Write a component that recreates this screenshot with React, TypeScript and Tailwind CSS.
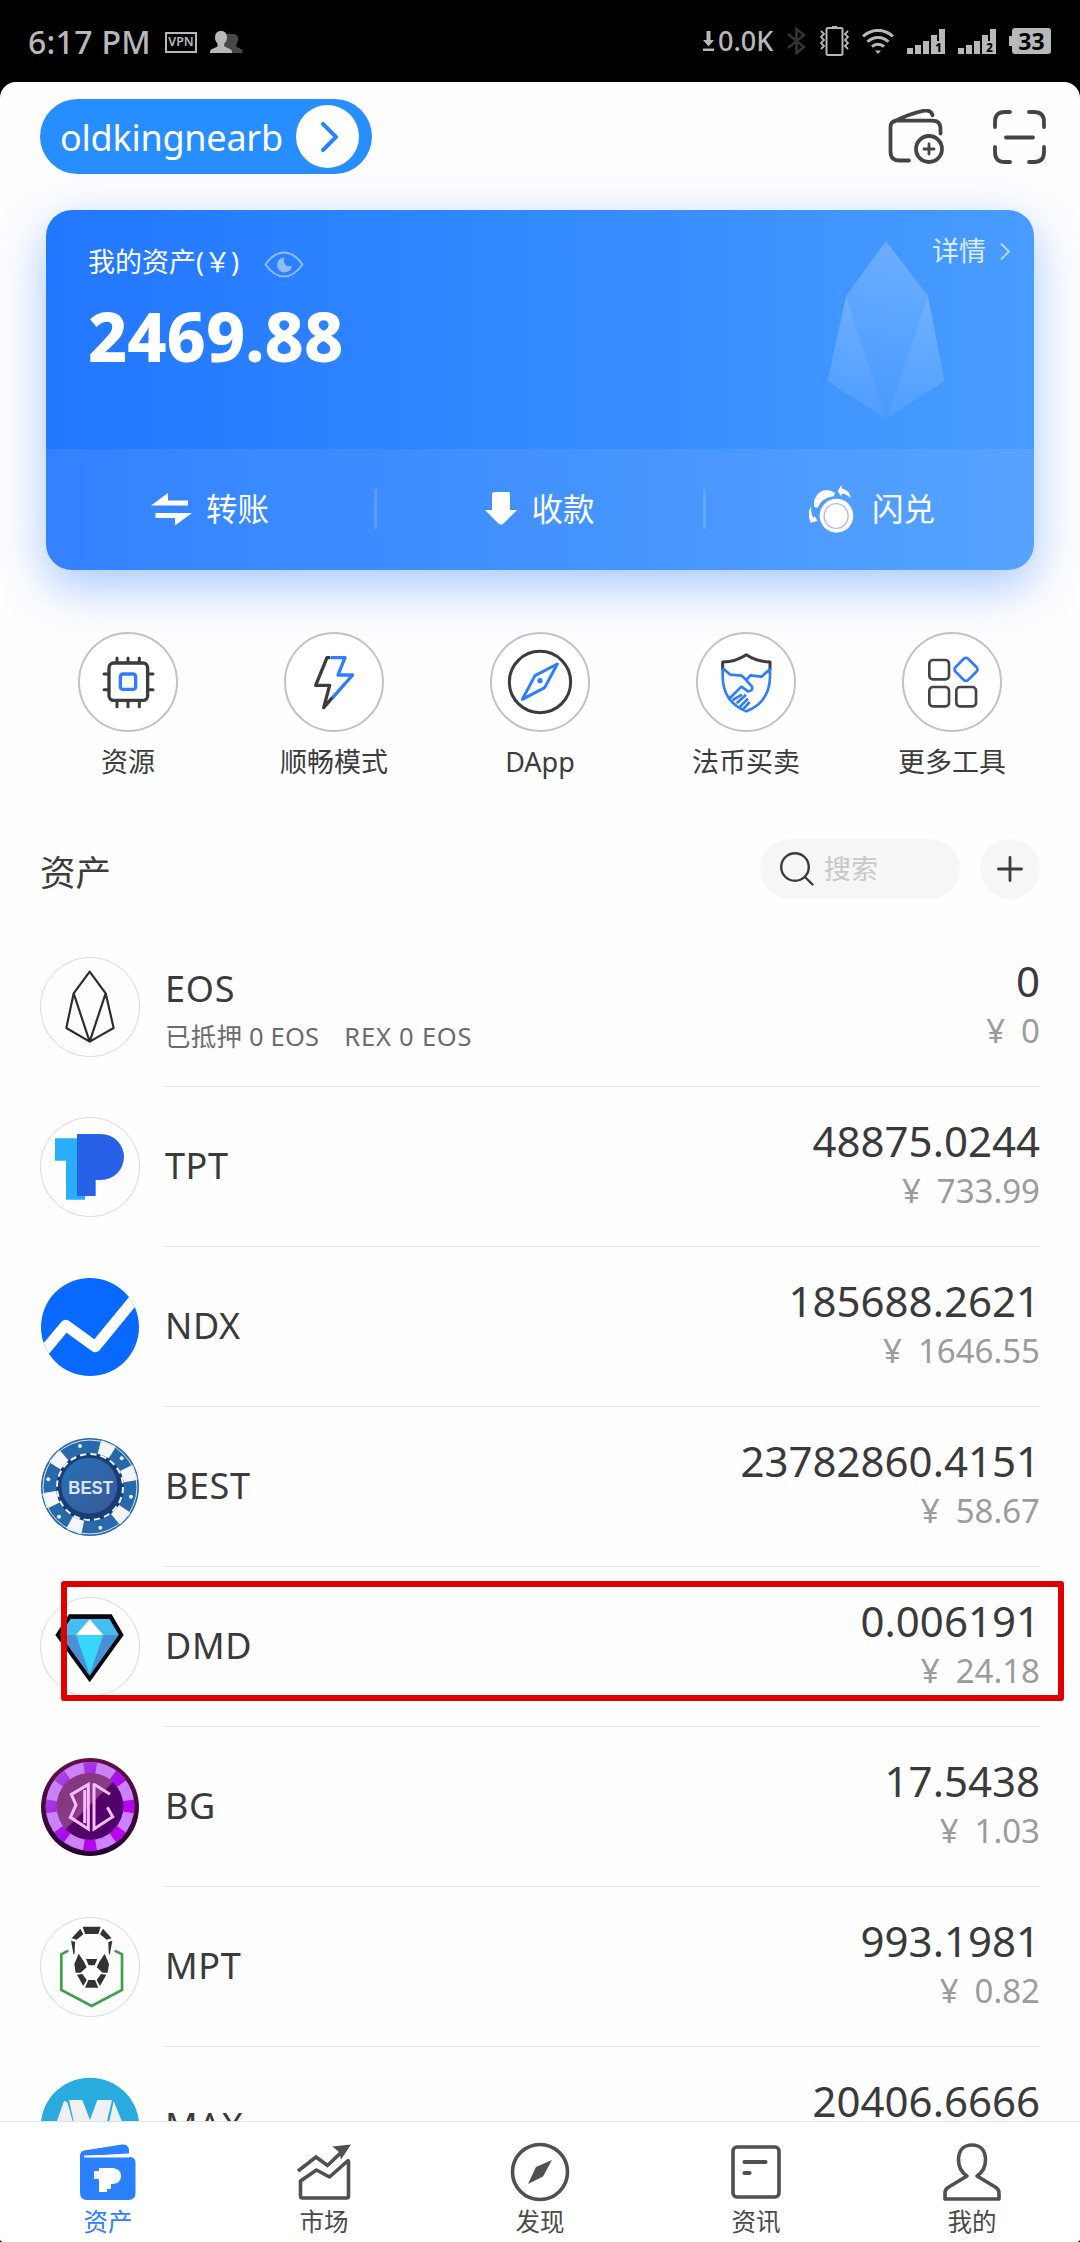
import type { ReactNode } from "react";

const INK = "#3c3c3c";

function mirror(points: string, axis: number) {
  return points
    .split(" ")
    .map((p) => {
      const [x, y] = p.split(",").map(Number);
      return `${axis * 2 - x},${y}`;
    })
    .join(" ");
}

function StatusBar() {
  return (
    <div className="flex h-[82px] shrink-0 items-center justify-between bg-black pr-[29px] pl-7 text-[#b8b8b8]">
      <div className="flex items-center pt-0.5">
        <span className="w-[137px] text-[32px] leading-10 font-medium tracking-[0.3px] whitespace-nowrap">6:17 PM</span>
        <span className="flex h-[21px] w-8 items-center justify-center border-2 border-[#b8b8b8] text-[12.5px] leading-none font-semibold">
          VPN
        </span>
        <svg className="ml-[13px] h-[22px] w-[33px]" viewBox="0 0 33 22">
          <path
            fill="#484848"
            d="M23.500 3c3.200 0 4.700 2.100 4.700 5 0 2.200-.8 4-1.900 5.200v2.300l6.200 3.400V22H15V3z"
          />
          <path
            fill="#b8b8b8"
            d="M11 0c4 0 6 2.600 6 6.200 0 2.600-.9 4.900-2.500 6.200v3l6.300 3c1 .5 1.200 1.500 1.200 3.600H0c0-2 .2-3.100 1.200-3.600l6.300-3v-3C5.900 11.100 5 8.800 5 6.200 5 2.600 7 0 11 0z"
          />
        </svg>
      </div>
      <div className="flex items-center">
        <svg className="h-5 w-[11px]" viewBox="0 0 11 20" fill="#b8b8b8">
          <path d="M3.500 0h4v9H11l-5.500 6.500L0 9h3.500zM0 17.500h11V20H0z" />
        </svg>
        <span className="ml-1 w-[69px] text-[27px] leading-10 font-medium whitespace-nowrap">0.0K</span>
        <svg className="h-7 w-[19px]" viewBox="0 0 19 28" fill="none" stroke="#333" strokeWidth="2.600">
          <path d="M1 7l16 13-7.500 6V2L17 8 1 21" />
        </svg>
        <svg className="ml-[14px] h-[30px] w-[29px]" viewBox="0 0 29 30" fill="none" stroke="#b8b8b8" strokeWidth="2">
          <rect x="6.500" y="2" width="16" height="27" rx="1.500" />
          <path d="M12 1.500h5" strokeWidth="3" />
          <path d="M1 5l3 3-3 3 3 3-3 3 3 3-3 3M28 5l-3 3 3 3-3 3 3 3-3 3 3 3" strokeWidth="1.800" />
        </svg>
        <svg className="ml-[13px] h-[25px] w-8" viewBox="0 0 32 25" fill="none" stroke="#b8b8b8" strokeWidth="3">
          <path d="M1 7.500a21.500 21.500 0 0 1 30 0M5.500 12.700a15 15 0 0 1 21 0M10 17.700a8.700 8.700 0 0 1 12 0" />
          <path d="M13 21.500h6L16 25z" fill="#b8b8b8" stroke="none" />
        </svg>
        {["1", "2"].map((n, i) => (
          <svg
            key={n}
            className={i ? "ml-[13px] h-[25px] w-[38px] overflow-visible" : "ml-[13px] h-[25px] w-[38px] overflow-visible"}
            viewBox="0 0 38 25"
          >
            <path fill="#b8b8b8" d="M0 19h6v6H0zM8 16h6v9H8zM16 12h6v13h-6zM24 6h6v6h2V0h6v25H24z" />
            <text x="31.500" y="23" fontSize="11.500" fontWeight="800" textAnchor="middle" fill="#000">
              {n}
            </text>
          </svg>
        ))}
        <div className="ml-[13px] flex h-[26px] items-center">
          <div className="h-[10px] w-[3px] bg-[#b8b8b8]" />
          <div className="flex h-[26px] w-[39px] items-center justify-center rounded-[3px] bg-[#b8b8b8] text-[23px] leading-none font-bold text-black">
            33
          </div>
        </div>
      </div>
    </div>
  );
}

function Header() {
  return (
    <div className="flex h-[75px] shrink-0 items-center justify-between pr-[34px] pl-10">
      <div className="flex h-[75px] w-[332px] items-center rounded-full bg-[#268eff] pl-5 text-white">
        <span className="w-[236px] pt-0.5 text-[36px] leading-[50px] tracking-[-0.25px] whitespace-nowrap">oldkingnearb</span>
        <span className="flex h-[63px] w-[63px] items-center justify-center rounded-full bg-white">
          <svg className="ml-1 h-[30px] w-[18px]" viewBox="0 0 18 30" fill="none" stroke="#2a84f5" strokeWidth="4" strokeLinecap="round" strokeLinejoin="round">
            <path d="M2 2l13 13L2 28" />
          </svg>
        </span>
      </div>
      <div className="flex items-center gap-[49px]">
        <svg className="h-14 w-14" viewBox="888 109 56 56" fill="none" stroke="#444" strokeWidth="3.800" strokeLinecap="round" strokeLinejoin="round">
          <path d="M909 160.500h-9.500q-9 0-9-9V127q0-5 5-6.300h37q8 0 8 8v4.800M894 121.500q16-8 30-10.800 7-1 8.500 4.500" />
          <circle cx="929" cy="149" r="13" />
          <path d="M929 144v10M924 149h10" strokeWidth="2.800" />
        </svg>
        <svg className="h-[54px] w-[53px]" viewBox="0 0 53 54" fill="none" stroke="#444" strokeWidth="3.800" strokeLinecap="round">
          <path d="M2 17v-5Q2 2 12 2h5M36 2h5q10 0 10 10v5M51 37v5q0 10-10 10h-5M17 52h-5Q2 52 2 42v-5M13 27.500h27" />
        </svg>
      </div>
    </div>
  );
}

function CardAction({ icon, label, gap }: { icon: ReactNode; label: string; gap: string }) {
  return (
    <div className={`flex items-center justify-center ${gap}`}>
      {icon}
      <span className="text-[31.500px] leading-10">{label}</span>
    </div>
  );
}

function BalanceCard() {
  return (
    <div className="mx-[46px] mt-9 flex h-[360px] shrink-0 flex-col overflow-hidden rounded-[26px] bg-linear-to-r from-[#2277ff] via-[#3389ff] to-[#489cff] text-white shadow-[0_16px_50px_rgba(41,121,255,0.42)]">
      <div className="relative flex h-[239px] shrink-0 justify-between pl-[42px]">
        <div className="pt-[34px]">
          <div className="flex items-center">
            <span className="text-[27px] leading-9 whitespace-nowrap">我的资产(￥)</span>
            <svg className="mt-1 ml-[25px] h-[27px] w-10" viewBox="0 0 40 27" fill="none" stroke="#8fbcff" strokeWidth="2">
              <path d="M1.500 13.500Q10 1.500 20 1.500t18.500 12Q30 25.500 20 25.500T1.500 13.500z" />
              <path d="M20 6a7.500 7.500 0 1 0 7.500 8.500q-5 1-7-1.800T20 6z" fill="#8fbcff" stroke="none" transform="translate(.5 .5)" />
            </svg>
          </div>
          <div className="mt-[13px] text-[68px] leading-[86px] font-extrabold">2469.88</div>
        </div>
        <svg className="absolute top-[31px] left-[781px] h-[179px] w-[118px]" viewBox="827 241 118 179">
          <defs>
            <linearGradient id="face" x1="0" y1="0" x2="0" y2="1">
              <stop offset="0" stopColor="#fff" stopOpacity=".22" />
              <stop offset="1" stopColor="#fff" stopOpacity=".03" />
            </linearGradient>
            <linearGradient id="side" x1="0" y1="0" x2="0" y2="1">
              <stop offset="0" stopColor="#fff" stopOpacity=".24" />
              <stop offset="1" stopColor="#fff" stopOpacity=".07" />
            </linearGradient>
          </defs>
          <path fill="url(#face)" d="M886 241l42 55-42 123-40-123z" />
          <path fill="url(#side)" d="M846 296l40 123-58.500-38zM928 296l-42 123 58.500-38z" />
        </svg>
        <div className="mt-[23px] flex h-9 items-center pr-6 text-white/80">
          <span className="text-[27px] leading-9">详情</span>
          <svg className="ml-3.5 h-[17px] w-[10px]" viewBox="0 0 10 17" fill="none" stroke="#bcdcff" strokeWidth="1.800">
            <path d="M1 .5l8 8-8 8" />
          </svg>
        </div>
      </div>
      <div className="grid flex-1 grid-cols-[328px_332px_328px] items-center bg-white/8 pb-0.5">
        <CardAction
          label="转账"
          gap="gap-[14px]"
          icon={
            <svg className="h-8 w-[41px]" viewBox="0 0 41 32" fill="#fff">
              <path d="M0 12.500L17 0v7.500h20v5zM41 20L24 32.500V25H4.500v-5z" />
            </svg>
          }
        />
        <div className="flex h-10 items-center justify-center border-x-[3px] border-white/15">
          <CardAction
            label="收款"
            gap="gap-[14px]"
            icon={
              <svg className="h-[33px] w-8" viewBox="0 0 32 33" fill="#fff">
                <path d="M9 0h14q2 0 2 2v16h7L19 31q-3 3-6 0L0 18h7V2q0-2 2-2z" />
              </svg>
            }
          />
        </div>
        <div className="pl-1">
          <CardAction
            label="闪兑"
            gap="gap-[18px]"
            icon={
              <svg className="h-12 w-[45px]" viewBox="785 884 131 144" fill="#fff" preserveAspectRatio="none">
                <path d="M800 950q-5-22 13-42 22-18 48 0l-4 10q-35 5-47 34z" />
                <path d="M868 902l12-18v10q24 6 26 30-10-14-26-14v9zM792 948q-16 24-2 46l-2 4 22-6-8-14-4 4q-10-16-6-34z" />
                <ellipse cx="865" cy="976" rx="49" ry="51" />
                <ellipse cx="864" cy="977" rx="35" ry="37" fill="none" stroke="#b9b3f5" strokeWidth="4" />
              </svg>
            }
          />
        </div>
      </div>
    </div>
  );
}

const BLUE = "#2e7dff";

const tools: { label: string; icon: ReactNode }[] = [
  {
    label: "资源",
    icon: (
      <svg className="h-full w-full" viewBox="114 66 300 300" fill="none" stroke={INK} strokeWidth="9" strokeLinecap="round">
        <path d="M231 144v12M264 144v12M298 144v12M231 275v15M264 275v15M298 275v15M192 192h12M192 239h12M327 192h12M327 239h12" />
        <rect x="207" y="159" width="116" height="112" rx="14" strokeWidth="10" />
        <rect x="241" y="192" width="46" height="46" rx="8" stroke={BLUE} strokeWidth="10" />
      </svg>
    ),
  },
  {
    label: "顺畅模式",
    icon: (
      <svg className="h-full w-full" viewBox="732 66 300 300" fill="none" strokeWidth="10" strokeLinejoin="round" strokeLinecap="round">
        <path d="M875 143h40l-21 52h44l-60 68" stroke={BLUE} />
        <path d="M870 143h-9l-34 83h42l-18 67 26-30" stroke={INK} strokeLinecap="butt" />
      </svg>
    ),
  },
  {
    label: "DApp",
    icon: (
      <svg className="h-full w-full" viewBox="1350 66 300 300" fill="none" strokeWidth="9" strokeLinejoin="round">
        <circle cx="1500" cy="216" r="92" stroke={INK} />
        <path d="M1552 162l-67 35-38 71 67-35z" stroke={BLUE} />
        <circle cx="1500" cy="212" r="8" fill={BLUE} />
      </svg>
    ),
  },
  {
    label: "法币买卖",
    icon: (
      <svg className="h-full w-full" viewBox="408 66 300 300" fill="none" strokeWidth="9" strokeLinejoin="round">
        <path d="M488 180v-24q40-1 71-22 32 21 71 22v24" stroke={INK} />
        <path
          d="M488 178v24q2 75 71 102 69-27 71-102v-24l-26 22-33-4-12 14-14-13-34-3-23-20M558 210l18 20q4 12-12 14l-20-14-34 34M518 270l28-16M530 280l28-26M540 290l24-24M549 298l20-22"
          stroke={BLUE}
          strokeWidth="8"
        />
      </svg>
    ),
  },
  {
    label: "更多工具",
    icon: (
      <svg className="h-full w-full" viewBox="1026 66 300 300" fill="none" stroke="#444" strokeWidth="8">
        <rect x="1108" y="150" width="59" height="58" rx="11" />
        <rect x="1108" y="231" width="59" height="58" rx="11" />
        <rect x="1189" y="231" width="59" height="58" rx="11" />
        <rect x="1191" y="151" width="54" height="54" rx="9" stroke={BLUE} transform="rotate(45 1218 178)" />
      </svg>
    ),
  },
];

function Tools() {
  return (
    <div className="mt-[62px] grid shrink-0 grid-cols-5 px-[25px]">
      {tools.map((t) => (
        <div key={t.label} className="flex flex-col items-center">
          <div className="relative h-[100px] w-[100px] rounded-full bg-white">
            {t.icon}
            <div className="absolute inset-0 rounded-full border-2 border-[#c2c2c2]" />
          </div>
          <span className="mt-3 text-[27px] leading-9 text-[#3c3c3c]">{t.label}</span>
        </div>
      ))}
    </div>
  );
}

function AssetsHeader() {
  return (
    <div className="mt-[59px] flex h-[60px] shrink-0 items-center pr-10 pl-10">
      <h2 className="flex-1 pt-1.5 text-[35.500px] leading-[50px] text-[#3c3c3c]">资产</h2>
      <div className="flex h-[60px] w-[200px] items-center rounded-full bg-[#f4f6f8] pl-5">
        <svg className="h-[34px] w-[34px]" viewBox="0 0 34 34" fill="none" stroke="#3c3c3c" strokeWidth="2.400" strokeLinecap="round">
          <circle cx="15" cy="15" r="13.800" />
          <path d="M25 25l7.500 7.500" />
        </svg>
        <span className="ml-[10px] text-[27px] leading-9 text-[#c8c8c8]">搜索</span>
      </div>
      <div className="ml-5 flex h-[60px] w-[60px] items-center justify-center rounded-full bg-[#f4f6f8]">
        <svg className="h-[26px] w-[26px]" viewBox="0 0 26 26" stroke="#3c3c3c" strokeWidth="2.800" strokeLinecap="round">
          <path d="M13 1.500v23M1.500 13h23" />
        </svg>
      </div>
    </div>
  );
}

const cheek = "176,671 163,702 167,728 182,728 200,712 192,695";
const lionHalf = ["181,596 190,613 170,629 155,625", "153,632 165,636 164,668 161,676", cheek, "171,734 187,732 200,750 190,768"];

const coins: Record<string, ReactNode> = {
  EOS: (
    <svg className="h-full w-full" viewBox="120 411 300 300" fill="none" stroke="#2c2c2c" strokeWidth="6.500" strokeLinejoin="round">
      <path d="M269 455l48 65-48 145-48-145zM221 520l-22 104 70 41 72-41-24-104" />
    </svg>
  ),
  TPT: (
    <svg className="h-full w-full" viewBox="120 891 300 300">
      <path fill="#29aefd" d="M165 955h90v184h-57v-117h-33z" />
      <path fill="#2761e7" d="M231 942h72a69 69 0 0 1 0 138h-16v48h-56z" />
    </svg>
  ),
  NDX: (
    <svg className="h-full w-full" viewBox="60 81 300 300">
      <clipPath id="ndx">
        <circle cx="210" cy="231" r="147" />
      </clipPath>
      <circle cx="210" cy="231" r="147" fill="#0769ff" />
      <path d="M60 318l77-92 89 64 128-156" clipPath="url(#ndx)" fill="none" stroke="#fff" strokeWidth="33" strokeLinejoin="round" />
    </svg>
  ),
  BEST: (
    <svg className="h-full w-full" viewBox="60 561 300 300">
      <defs>
        <linearGradient id="best" x1="0" y1="0" x2="1" y2="1">
          <stop offset="0" stopColor="#2472b8" />
          <stop offset="1" stopColor="#3d5794" />
        </linearGradient>
      </defs>
      <circle cx="210" cy="711" r="147" fill="#2869ac" />
      {[-67, -18, 42, 110, 163, 221].map((a) => (
        <path key={a} d="M311 693l33-5 9 1v44l-9 1-33-5z" transform={`rotate(${a} 210 711)`} fill="#f4f6f8" />
      ))}
      <circle cx="210" cy="711" r="141" fill="none" stroke="#dce9f5" strokeWidth="3" />
      <circle cx="210" cy="711" r="102" fill="#173d78" />
      <circle cx="210" cy="711" r="99" fill="none" stroke="#f0f5fa" strokeWidth="6" strokeDasharray="19 12.100" />
      <circle cx="208" cy="707" r="84" fill="url(#best)" />
      {["180,588", "305,625", "333,740", "241,833", "117,800", "85,688"].map((p) => (
        <circle key={p} cx={p.split(",")[0]} cy={p.split(",")[1]} r="6" fill="#e6f0fa" />
      ))}
      <text x="212" y="732" fontFamily="Liberation Sans" fontSize="54" fontWeight="700" textAnchor="middle" textLength="134" lengthAdjust="spacingAndGlyphs" fill="#dce5f5">
        BEST
      </text>
    </svg>
  ),
  DMD: (
    <svg className="h-full w-full" viewBox="60 1041 300 300">
      <path fill="#05080c" d="M147 1093h128l36 62-102 142-103-142z" />
      <path fill="#4a90d6" d="M152 1107h116l28 48-87 122-88-122z" />
      <path fill="#45bdee" d="M152 1107h116l28 48H121z" />
      <path fill="#36d7fa" d="M168 1155h82l-41 118z" />
      <path fill="#fff" d="M209 1108l41 47h-82z" />
    </svg>
  ),
  BG: (
    <svg className="h-full w-full" viewBox="60 81 300 300">
      <defs>
        <linearGradient id="rim" x1="0" y1="0" x2="0" y2="1">
          <stop offset="0" stopColor="#641048" />
          <stop offset="1" stopColor="#260030" />
        </linearGradient>
        <linearGradient id="core" x1="0" y1="0" x2="1" y2="1">
          <stop offset="0" stopColor="#80357a" />
          <stop offset=".48" stopColor="#8a3c86" />
          <stop offset=".5" stopColor="#560068" />
          <stop offset="1" stopColor="#4c0070" />
        </linearGradient>
        <linearGradient id="seg" x1="0" y1="0" x2="1" y2="1">
          <stop offset="0" stopColor="#a255da" />
          <stop offset=".55" stopColor="#a909f0" />
          <stop offset="1" stopColor="#c400f0" />
        </linearGradient>
      </defs>
      <circle cx="210" cy="231" r="147" fill="url(#rim)" />
      <circle cx="210" cy="229" r="116" fill="none" stroke="#cc80fb" strokeWidth="34" />
      <circle cx="210" cy="229" r="116" fill="none" stroke="url(#seg)" strokeWidth="34" pathLength="160" strokeDasharray="8 12" strokeDashoffset="4" />
      <circle cx="210" cy="229" r="100" fill="url(#core)" />
      <path
        d="M205 163v134l-54-35 17-37-14-32zM194 180v100M222 163l48 30M222 160v137l56-37-16-28"
        fill="none"
        stroke="#f6bdf8"
        strokeWidth="9"
      />
    </svg>
  ),
  MPT: (
    <svg className="h-full w-full" viewBox="60 561 300 300">
      <path d="M145 662l-21 11v107l91 48 91-48V673l-22-11" fill="none" stroke="#3f9f4c" strokeWidth="8" />
      <g fill="#333">
        <polygon points="188,590 242,590 235,612 195,612" />
        {lionHalf.map((p) => (
          <g key={p}>
            <polygon points={p} />
            <polygon points={mirror(p, 215)} />
          </g>
        ))}
        <polygon points="198,687 232,687 224,706 206,706" />
        <polygon points="205,750 225,750 235,773 195,773" />
      </g>
    </svg>
  ),
  MAX: (
    <svg className="h-full w-full" viewBox="60 1041 300 300">
      <circle cx="210" cy="1191" r="148" fill="#29abe0" />
      <path fill="#eef0f2" d="M132 1113l10 4 20 70h-56zM147 1110h40l23 60 22-60h44l-18 77h-94zM281 1113l30 74h-46z" />
    </svg>
  ),
};

const assets = [
  { name: "EOS", amount: "0", value: "0", outlined: true },
  { name: "TPT", amount: "48875.0244", value: "733.99", outlined: true },
  { name: "NDX", amount: "185688.2621", value: "1646.55" },
  { name: "BEST", amount: "23782860.4151", value: "58.67" },
  { name: "DMD", amount: "0.006191", value: "24.18", outlined: true },
  { name: "BG", amount: "17.5438", value: "1.03" },
  { name: "MPT", amount: "993.1981", value: "0.82", outlined: true },
  { name: "MAX", amount: "20406.6666", value: "" },
];

function AssetRow({ name, amount, value, outlined }: { name: string; amount: string; value: string; outlined?: boolean }) {
  return (
    <div className="relative flex h-40 shrink-0 pr-10 pl-10">
      <div className={`mt-[30px] h-[100px] w-[100px] overflow-hidden rounded-full ${outlined ? "shadow-[inset_0_0_0_1px_#dcdcdc]" : ""}`}>
        {coins[name]}
      </div>
      <div className="ml-[25px] flex flex-1 justify-between border-b border-[#e4e4e4]">
        {name === "EOS" ? (
          <div className="pt-9">
            <div className="text-[36px] leading-[52px] tracking-[0.8px] text-[#3a3a3a]">EOS</div>
            <div className="flex gap-[25px] text-[25.500px] leading-[42px] whitespace-nowrap text-[#6c6c6c]">
              <span className="tracking-[0.2px]">已抵押 0 EOS</span>
              <span className="tracking-[0.8px]">REX 0 EOS</span>
            </div>
          </div>
        ) : (
          <div className="pt-[53px] text-[36px] leading-[52px] tracking-[0.6px] text-[#3a3a3a]">{name}</div>
        )}
        <div className="text-right">
          <div className="pt-[26px] text-[42px] leading-[56px] text-[#3a3a3a]">{amount}</div>
          {value && (
            <div className="mt-px flex justify-end gap-4 text-[33px] leading-[42px] text-[#9c9c9c]">
              <span>¥</span>
              <span>{value}</span>
            </div>
          )}
        </div>
      </div>
      {name === "DMD" && (
        <div className="absolute top-[14px] left-[61px] h-[120px] w-[1003px] rounded-[3px] border-[6px] border-[#e00000]" />
      )}
    </div>
  );
}

const tabs: { label: string; icon: ReactNode; active?: boolean }[] = [
  {
    label: "资产",
    active: true,
    icon: (
      <svg className="h-14 w-14" viewBox="80 2143 56 56" fill="#2b80ff">
        <path d="M80 2155q0-4.500 4-5.500l38-6q6-.5 7 5v4l-45 2.500v1H130q5.500 0 5.500 6v30q0 7-7 7H87q-7 0-7-7z" />
        <path d="M84 2154.500l45-1v3H84z" fill="#fff" />
        <path fill="#fff" d="M94 2170h5v-3h14q8 1 8 8 0 7-8 8h-2v5h-4v3h-8v-13h-5z" />
      </svg>
    ),
  },
  {
    label: "市场",
    icon: (
      <svg className="h-14 w-[54px]" viewBox="295.500 2142 54 56" fill="none" stroke="#505050" strokeWidth="3.600" strokeLinejoin="round">
        <path d="M299 2179l16-11 13 7 18-16q1-1 1 1v34q0 2-2 2h-44q-2 0-2-2z" />
        <path d="M296.500 2169l18-14 11.500 8.500 13-12.500" strokeLinejoin="miter" />
        <path d="M331 2144.500l18.500-2-10 15-1.500-7z" fill="#505050" stroke="none" />
      </svg>
    ),
  },
  {
    label: "发现",
    icon: (
      <svg className="h-[60px] w-[60px]" viewBox="0 0 60 60">
        <circle cx="30" cy="30" r="27.500" fill="none" stroke="#505050" strokeWidth="3.600" />
        <path d="M42 18L33 34.500 18 42l8-17z" fill="#505050" />
      </svg>
    ),
  },
  {
    label: "资讯",
    icon: (
      <svg className="h-[54px] w-[50px]" viewBox="0 0 50 54" fill="none" stroke="#505050" strokeWidth="3.600" strokeLinecap="round">
        <rect x="2" y="2" width="46" height="50" rx="4" />
        <path d="M13.500 17h21M13.500 28h5" strokeWidth="4.200" />
      </svg>
    ),
  },
  {
    label: "我的",
    icon: (
      <svg className="h-[58px] w-[58px]" viewBox="0 0 58 58" fill="none" stroke="#505050" strokeWidth="3.600" strokeLinejoin="round">
        <path d="M24 33q-8.500-5.500-8.500-16C15.500 7.500 20.500 2 29 2s13.500 5.500 13.500 15q0 10.500-8.500 16l19 11.500q3 2 3 5.500v6H2v-6q0-3.500 3-5.500z" />
      </svg>
    ),
  },
];

function TabBar() {
  return (
    <div className="grid h-[121px] shrink-0 grid-cols-5 border-t border-[#e6e6e6] bg-white">
      {tabs.map((t) => (
        <div key={t.label} className="flex flex-col items-center">
          <div className="mt-5 flex h-[60px] items-center">{t.icon}</div>
          <span className={`mt-[3px] text-[24.500px] leading-[34px] ${t.active ? "text-[#2b80ff]" : "text-[#4a4a4a]"}`}>{t.label}</span>
        </div>
      ))}
    </div>
  );
}

export default function App() {
  return (
    <div className="flex h-[2242px] w-[1080px] flex-col overflow-hidden bg-black font-['Noto_Sans','Noto_Sans_CJK_SC',sans-serif]">
      <StatusBar />
      <div className="flex min-h-0 flex-1 flex-col overflow-hidden rounded-t-[16px] rounded-b-[4px] bg-[#fefefe]">
        <div className="flex min-h-0 flex-1 flex-col overflow-hidden pt-[17px]">
          <Header />
          <BalanceCard />
          <Tools />
          <AssetsHeader />
          <div className="mt-7 flex shrink-0 flex-col">
            {assets.map((a) => (
              <AssetRow key={a.name} {...a} />
            ))}
          </div>
        </div>
        <TabBar />
      </div>
    </div>
  );
}
